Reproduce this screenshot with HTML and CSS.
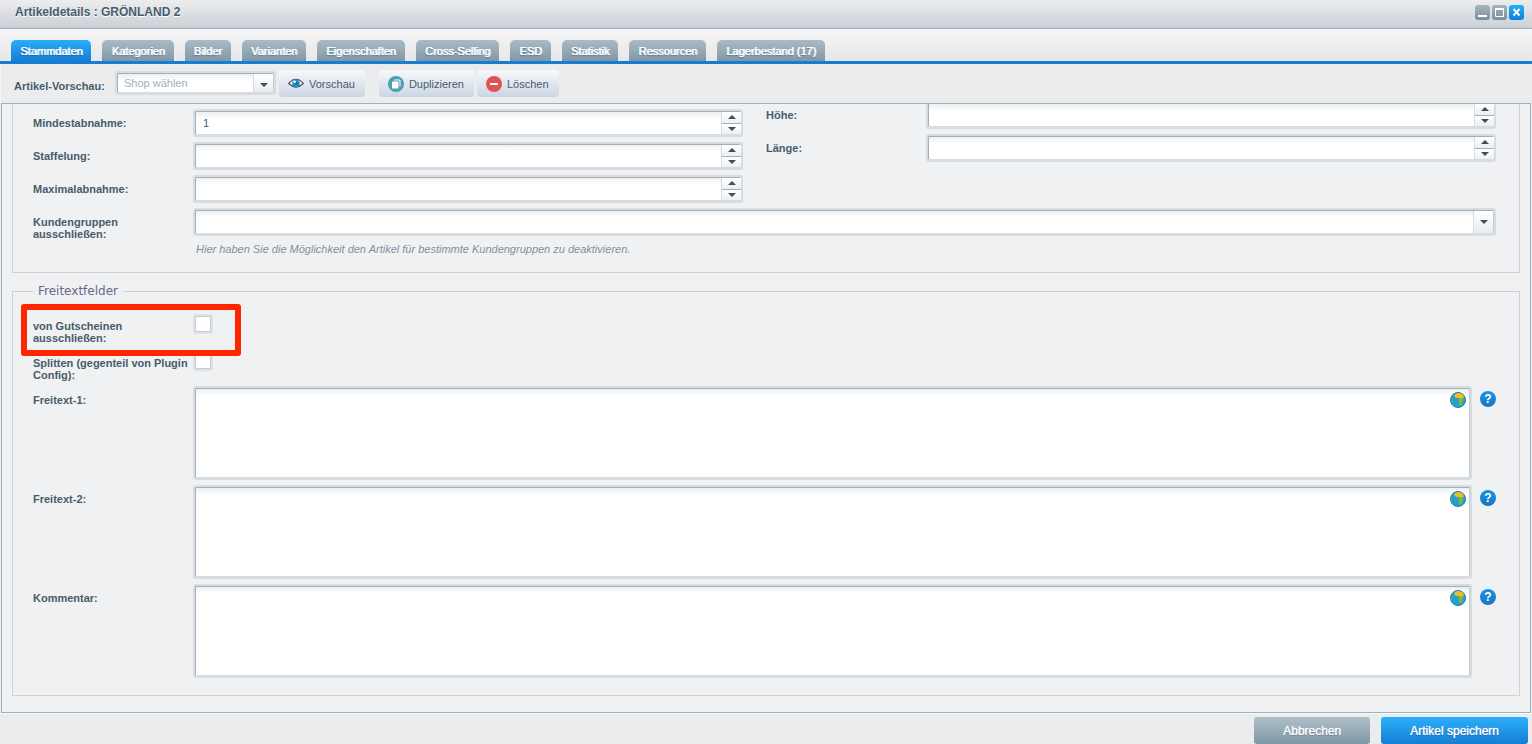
FILE: index.html
```html
<!DOCTYPE html>
<html lang="de">
<head>
<meta charset="utf-8">
<title>Artikeldetails : GRÖNLAND 2</title>
<link rel="stylesheet" href="styles.css">
</head>
<body>
<svg class="sprite" aria-hidden="true">
  <symbol id="globe" viewBox="0 0 16 16">
    <circle cx="8" cy="8" r="7.5" fill="#23a0d3" stroke="#1b82ae"/>
    <path d="M4.500 3 6 1.600 9 1 11.500 1.800 13.300 3.600 14 5.500 12.600 6.500 9 7 8.600 5.800 6 6 4.500 4.800Z" fill="#f0bd1c"/>
    <path d="M9 6.500 13 5.800 13 8.500 11.800 12 10.500 13.800 9.500 13.200 8.900 10Z" fill="#92b32c"/>
    <path d="M.8 7 2 8 1.800 10 1 9.500Z" fill="#92b32c"/>
  </symbol>
  <symbol id="up" viewBox="0 0 8 4"><path d="M4 0 8 4H0Z" fill="#3f4e58"/></symbol>
  <symbol id="down" viewBox="0 0 8 4"><path d="M0 0H8L4 4Z" fill="#3f4e58"/></symbol>
</svg>
<div class="window">
  <header class="titlebar">
    <h1 class="title">Artikeldetails : GRÖNLAND 2</h1>
    <div class="tools">
      <button class="tool" type="button" aria-label="Minimieren"><svg viewBox="0 0 15 15"><path d="M3 11h9" stroke="#fff" stroke-width="2"/></svg></button>
      <button class="tool" type="button" aria-label="Maximieren"><svg viewBox="0 0 15 15"><path d="M3.500 3v8.500h8V3M3 4h9" fill="none" stroke="#fff"/><path d="M3 4h9" stroke="#fff" stroke-width="2"/></svg></button>
      <button class="tool close" type="button" aria-label="Schließen"><svg viewBox="0 0 15 15"><path d="m4.500 4 6 6.500m0-6.500-6 6.500" stroke="#fff" stroke-width="2"/></svg></button>
    </div>
  </header>
  <nav class="tabs" role="tablist">
    <button class="tab active" role="tab" aria-selected="true">Stammdaten</button>
    <button class="tab" role="tab">Kategorien</button>
    <button class="tab" role="tab">Bilder</button>
    <button class="tab" role="tab">Varianten</button>
    <button class="tab" role="tab">Eigenschaften</button>
    <button class="tab" role="tab">Cross-Selling</button>
    <button class="tab" role="tab">ESD</button>
    <button class="tab" role="tab">Statistik</button>
    <button class="tab" role="tab">Ressourcen</button>
    <button class="tab" role="tab">Lagerbestand (17)</button>
  </nav>
  <div class="toolbar">
    <label class="toolbar-label" for="shop">Artikel-Vorschau:</label>
    <div class="frame shop">
      <select class="control placeholder" id="shop"><option>Shop wählen</option></select>
      <span class="trigger"><svg class="arrow"><use href="#down"/></svg></span>
    </div>
    <button class="action preview" type="button">
      <svg class="action-icon" viewBox="0 0 16 16"><path d="M.7 7.500Q8-1 15.300 7.500 8 14.500 .7 7.500Z" fill="#fff" stroke="#4c5357" stroke-width="1.200"/><circle cx="8" cy="7.200" r="3.800" fill="#1b8fd0"/><circle cx="8.500" cy="7.500" r="1.400" fill="#0c6fb0"/><circle cx="6.600" cy="5.800" r="1.300" fill="#fff"/></svg>Vorschau</button>
    <button class="action" type="button">
      <svg class="action-icon" viewBox="0 0 16 16"><circle cx="8" cy="8" r="8" fill="#4c9fb1"/><path d="M6 4h6v6.500" fill="none" stroke="#fff"/><path d="M4 5.500h6.500v7H4z" fill="#fff"/></svg>Duplizieren</button>
    <button class="action" type="button">
      <svg class="action-icon" viewBox="0 0 16 16"><circle cx="8" cy="8" r="8" fill="#e25254"/><path d="M4 8h8" stroke="#fff" stroke-width="2"/></svg>Löschen</button>
  </div>
  <main class="panel">
    <section class="group upper">
      <div class="columns">
        <div class="rows first">
          <div class="row"><label for="min">Mindestabnahme:</label><div class="frame"><input class="control" id="min" type="number" value="1"><span class="spinner"><button type="button" aria-label="Mehr"><svg class="arrow"><use href="#up"/></svg></button><button type="button" aria-label="Weniger"><svg class="arrow"><use href="#down"/></svg></button></span></div></div>
          <div class="row"><label for="step">Staffelung:</label><div class="frame"><input class="control" id="step" type="number"><span class="spinner"><button type="button" aria-label="Mehr"><svg class="arrow"><use href="#up"/></svg></button><button type="button" aria-label="Weniger"><svg class="arrow"><use href="#down"/></svg></button></span></div></div>
          <div class="row"><label for="max">Maximalabnahme:</label><div class="frame"><input class="control" id="max" type="number"><span class="spinner"><button type="button" aria-label="Mehr"><svg class="arrow"><use href="#up"/></svg></button><button type="button" aria-label="Weniger"><svg class="arrow"><use href="#down"/></svg></button></span></div></div>
        </div>
        <div class="rows">
          <div class="row"><label for="height">Höhe:</label><div class="frame"><input class="control" id="height" type="number"><span class="spinner"><button type="button" aria-label="Mehr"><svg class="arrow"><use href="#up"/></svg></button><button type="button" aria-label="Weniger"><svg class="arrow"><use href="#down"/></svg></button></span></div></div>
          <div class="row"><label for="length">Länge:</label><div class="frame"><input class="control" id="length" type="number"><span class="spinner"><button type="button" aria-label="Mehr"><svg class="arrow"><use href="#up"/></svg></button><button type="button" aria-label="Weniger"><svg class="arrow"><use href="#down"/></svg></button></span></div></div>
        </div>
      </div>
      <div class="row">
        <label for="groups">Kundengruppen ausschließen:</label>
        <div class="field">
          <div class="frame"><select class="control" id="groups"><option></option></select><span class="trigger"><svg class="arrow"><use href="#down"/></svg></span></div>
          <p class="hint">Hier haben Sie die Möglichkeit den Artikel für bestimmte Kundengruppen zu deaktivieren.</p>
        </div>
      </div>
    </section>
    <fieldset class="group free">
      <legend>Freitextfelder</legend>
      <div class="rows">
        <div class="row marked"><label for="voucher">von Gutscheinen ausschließen:</label><input class="check" id="voucher" type="checkbox"></div>
        <div class="row"><label for="split">Splitten (gegenteil von Plugin Config):</label><input class="check" id="split" type="checkbox"></div>
        <div class="row"><label for="text1">Freitext-1:</label><div class="frame"><textarea class="control" id="text1"></textarea><svg class="globe"><use href="#globe"/></svg></div><button class="help" type="button">?</button></div>
        <div class="row"><label for="text2">Freitext-2:</label><div class="frame"><textarea class="control" id="text2"></textarea><svg class="globe"><use href="#globe"/></svg></div><button class="help" type="button">?</button></div>
        <div class="row"><label for="comment">Kommentar:</label><div class="frame"><textarea class="control" id="comment"></textarea><svg class="globe"><use href="#globe"/></svg></div><button class="help" type="button">?</button></div>
      </div>
    </fieldset>
  </main>
  <footer class="footer">
    <button class="btn cancel" type="button">Abbrechen</button>
    <button class="btn save" type="button">Artikel speichern</button>
  </footer>
</div>
</body>
</html>
```
FILE: styles.css
```css
*, *::after { box-sizing: border-box; }
body {
  margin: 0;
  font: 11px/12px "Liberation Sans", Arial, sans-serif;
  color: #475c6a;
  background: #ebecee;
}
button, input, select, textarea { font: inherit; color: inherit; margin: 0; }
button { border: 0; padding: 0; cursor: pointer; }
.sprite { display: none; }
.window { display: flex; flex-direction: column; min-height: 100vh; }

.titlebar {
  display: flex;
  justify-content: space-between;
  height: 29px;
  padding: 5px 8px 0 15px;
  background: linear-gradient(#ededee, #c9d0d7);
  border-bottom: 1px solid #a0b1be;
}
.title { margin: 0; font-size: 12px; line-height: 14px; text-shadow: 0 1px 0 #fff; }
.tools { display: flex; gap: 2px; }
.tool {
  width: 15px;
  height: 15px;
  border-radius: 3px;
  background: linear-gradient(#a5b4be, #7b8f9c);
}
.tool svg { display: block; width: 15px; height: 15px; }
.tool.close { background: linear-gradient(#1fb0fa, #0f80d8); }

.tabs {
  display: flex;
  align-items: flex-end;
  gap: 11px;
  height: 35px;
  padding-left: 11px;
  background: linear-gradient(#f6f6f6, #e6e7e9);
  border-bottom: 3px solid #167dd2;
}
.tab {
  height: 21px;
  padding: 0 9px;
  border-radius: 5px 5px 0 0;
  color: #fff;
  background: linear-gradient(#abbac5, #8098a7);
  text-shadow: 1px 0 0 #fff, 0 1px 1px #5c7382;
}
.tab.active { background: linear-gradient(#29aef9, #167dd2); text-shadow: 1px 0 0 #fff, 0 1px 1px #0d5ea6; }

.toolbar {
  display: flex;
  align-items: flex-start;
  gap: 3px;
  height: 39px;
  padding: 6px 0 0 13px;
  border-left: 1px solid #f6f6f6;
}
.toolbar-label { width: 98px; padding-top: 10px; font-weight: bold; white-space: nowrap; }
.action {
  display: flex;
  align-items: center;
  height: 27px;
  padding: 0 10px 0 9px;
  gap: 5px;
  border-radius: 4px;
  background: linear-gradient(#f8f9fb, #cbd5e2);
}
.preview { margin-right: 11px; }
.action-icon { width: 16px; height: 16px; }

.frame {
  position: relative;
  flex: 1;
  display: flex;
  padding: 2px;
  border-radius: 3px;
  background: #d6dce2;
}
.control {
  appearance: none;
  width: 100%;
  height: 24px;
  padding: 0 7px;
  border: 1px solid;
  border-color: #a0afb9 #c3cdd5 #d6dce2 #a0afb9;
  border-radius: 2px;
  background: linear-gradient(#eeefef, #fff 7px);
  outline: 0;
}
.control::-webkit-inner-spin-button { appearance: none; }
textarea.control { display: block; height: 90px; resize: none; }
.control.placeholder { height: 20px; color: #9db0bc; padding: 0 6px; }
.shop { flex: none; width: 161px; margin-top: 1px; }
.trigger, .spinner {
  position: absolute;
  top: 3px;
  right: 3px;
  bottom: 3px;
  width: 20px;
  border-left: 1px solid #d6dce2;
  display: flex;
}
.trigger {
  align-items: center;
  justify-content: center;
  pointer-events: none;
  background: linear-gradient(#fff, #e9ebee);
}
.shop .trigger { padding-top: 4px; }
.spinner { right: 2px; flex-direction: column; }
.spinner button {
  flex: 1;
  display: flex;
  align-items: center;
  justify-content: center;
  background: linear-gradient(#fff, #eeeff2);
}
.spinner button + button { border-top: 1px solid #a0afb9; }
.arrow { width: 8px; height: 4px; }

.panel {
  flex: 1;
  margin: 0 1px;
  padding: 0 10px 16px;
  overflow: hidden;
  border: 1px solid #a0b1be;
  background: #f0f1f3;
}
.group { margin: 0; padding: 0 23px 0 20px; border: 1px solid #cfd1d4; }
.upper { margin-top: -3px; padding-bottom: 17px; border-top: 0; }
.columns {
  display: grid;
  grid-template-columns: 71fr 73fr;
  gap: 23px;
  padding-bottom: 5px;
}
.rows { display: flex; flex-direction: column; gap: 5px; }
.first { padding-top: 8px; }
.row { display: flex; align-items: flex-start; }
.row > label { flex: none; width: 160px; padding-top: 8px; font-weight: bold; }
.field { flex: 1; }
.hint { margin: 0; padding: 7px 3px 0; font-style: italic; color: #7d92a0; }
.free { margin-top: 11px; padding-bottom: 17px; }
.free legend {
  padding: 0 5px;
  font: 12px/14px "DejaVu Sans", Verdana, sans-serif;
  color: #66688a;
}
.free .rows { padding-top: 14px; }
.marked { position: relative; }
.marked::after {
  content: "";
  position: absolute;
  z-index: 1;
  top: -8px;
  left: -12px;
  width: 220px;
  height: 52px;
  border: 6px solid #ff2600;
  border-radius: 3px;
  pointer-events: none;
}
.check {
  appearance: none;
  width: 20px;
  height: 20px;
  margin-top: 2px;
  border: 2px solid #dfe3e7;
  border-radius: 3px;
  background: #fff;
  box-shadow: inset 0 0 0 1px #c3cbd2;
}
.globe { position: absolute; top: 6px; right: 6px; width: 16px; height: 16px; }
.help {
  width: 16px;
  height: 16px;
  margin: 5px 0 0 8px;
  border-radius: 50%;
  font-size: 12px;
  font-weight: bold;
  color: #fff;
  background: linear-gradient(#1593e6, #1d75bd);
}

.footer {
  display: flex;
  justify-content: flex-end;
  gap: 11px;
  padding: 3px 4px 0;
  border-top: 1px solid #f8f8f9;
}
.btn {
  height: 27px;
  padding: 0 29px;
  border-radius: 3px;
  font-size: 12px;
  color: #fff;
}
.cancel { background: linear-gradient(#afbfc9, #8097a6); text-shadow: 0 0 1px #fff, 0 1px 1px #5c7382; }
.save { background: linear-gradient(#2bb0fb, #167dd2); text-shadow: 0 0 1px #fff, 0 1px 1px #0d5ea6; }
```
